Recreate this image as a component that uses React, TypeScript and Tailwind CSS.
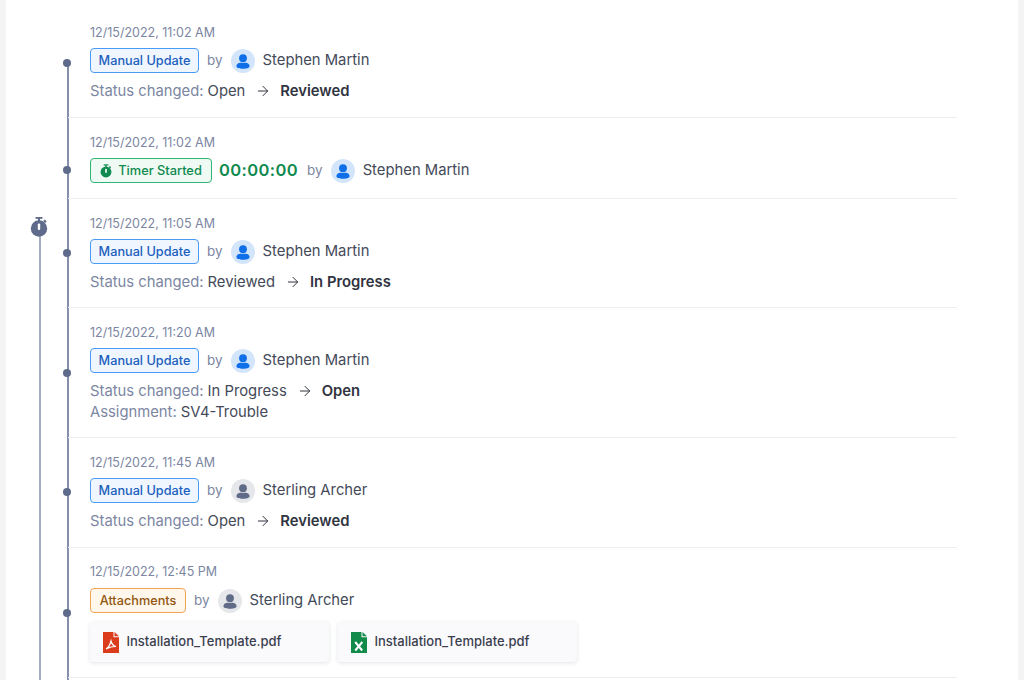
import { ArrowRight } from "lucide-react";

const font = { fontFamily: "Inter, 'Noto Sans', sans-serif" };

function Avatar({ gray }: { gray?: boolean }) {
  return (
    <div className={`w-6 h-6 rounded-full flex items-center justify-center ${gray ? "bg-[#e6e7eb]" : "bg-[#d2e5fa]"}`}>
      <svg viewBox="0 0 24 24" className="w-6 h-6" fill={gray ? "#5f6b87" : "#0f6fe8"}>
        <circle cx="12" cy="9.2" r="3.9" />
        <path d="M5.400 17.200c0-2.100 2-3.400 3.800-3.400h5.600c1.800 0 3.800 1.300 3.800 3.400 0 1.600-2.800 2.500-6.600 2.500s-6.600-.9-6.600-2.500z" />
      </svg>
    </div>
  );
}

function Stopwatch({ className, color }: { className: string; color: string }) {
  return (
    <svg viewBox="0 0 18 20" className={className}>
      <rect x="5.500" y="0" width="7" height="1.800" fill={color} />
      <rect x="8" y="1" width="2" height="3" fill={color} />
      <rect x="13.500" y="3" width="2.800" height="2.200" transform="rotate(45 14.800 4.200)" fill={color} />
      <circle cx="9" cy="11.500" r="8.200" fill={color} />
      <rect x="7.800" y="6.500" width="2.400" height="6.500" rx="1" fill="white" />
    </svg>
  );
}

function PdfIcon() {
  return (
    <svg viewBox="0 0 16 21" className="w-4 h-[21px]">
      <path d="M0 0h10.500v5.200H16V21H0z" fill="#dc3c1e" />
      <path d="M11.500 0L16 4.200h-4.500z" fill="#dc3c1e" />
      <path d="M3 17c2-1 4-4 5-8 .8 3 2.500 5 5 5.500-3-.2-6 .6-10 2.500z" fill="none" stroke="white" strokeWidth="1.200" />
    </svg>
  );
}

function XlsIcon() {
  return (
    <svg viewBox="0 0 16 21" className="w-4 h-[21px]">
      <path d="M0 0h10.500v5.200H16V21H0z" fill="#128a4a" />
      <path d="M11.500 0L16 4.200h-4.500z" fill="#128a4a" />
      <path d="M4.200 10l7 8.500M11.300 10l-7 8.500" stroke="white" strokeWidth="2" fill="none" />
    </svg>
  );
}

function By({ gray, name }: { gray?: boolean; name: string }) {
  return (
    <>
      <span className="text-[13.500px] text-[#7c86a2] ml-2">by</span>
      <div className="ml-2">
        <Avatar gray={gray} />
      </div>
      <span className="text-[14.800px] text-[#444a59] ml-2 -mt-px">{name}</span>
    </>
  );
}

function ManualTag() {
  return (
    <span className="h-[25px] w-[109px] flex items-center justify-center pt-px rounded bg-[#eff6ff] border border-[#4a9bf5] text-[#1c5fbd] text-[12.700px] font-medium">
      Manual Update
    </span>
  );
}

function Status({ from, to }: { from: string; to: string }) {
  return (
    <div className="mt-2 h-5 flex items-center text-[14.800px] leading-5">
      <span className="text-[#7c86a2]">Status changed:</span>
      <span className="text-[#444a59] ml-1">{from}</span>
      <ArrowRight className="w-4 h-4 ml-[10px] mr-[9px] text-[#30343f]" strokeWidth={1.500} />
      <span className="text-[#30343f] font-semibold">{to}</span>
    </div>
  );
}

function Row({ date, dot, last, children }: { date: string; dot: number; last?: boolean; children: React.ReactNode }) {
  return (
    <div className={`relative pl-[22px] border-b border-[#ecedf2] ${last ? "pt-4" : "pt-[17px]"}`}>
      <span className="block absolute left-[-5px] w-2 h-2 rounded-full bg-[#5f6b8b]" style={{ top: dot }} />
      <div className="h-4 leading-4 text-[12.500px] text-[#7c86a2]">{date}</div>
      {children}
    </div>
  );
}

function FileCard({ icon }: { icon: React.ReactNode }) {
  return (
    <div className="w-[239px] h-10 flex items-center gap-2 pl-[12.500px] rounded bg-[#fafafd] shadow-[0_1px_4px_rgba(50,55,80,0.14)]">
      {icon}
      <span className="text-[13px] font-medium text-[#3b404d]">Installation_Template.pdf</span>
    </div>
  );
}

export default function App() {
  return (
    <div className="w-[1024px] h-[680px] overflow-hidden bg-[#f4f4f5] pl-[6px] pr-[6px]" style={font}>
      <div className="relative h-full bg-white pt-2 pl-[62px]">
        {/* outer timeline */}
        <div className="absolute left-[32.500px] top-[228px] bottom-0 w-0.5 bg-[#a4abc2]" />
        <div className="absolute left-[24px] top-[217px] w-[18px] h-5">
          <Stopwatch className="w-[18px] h-5" color="#5f6b8b" />
        </div>

        <div className="relative w-[889px]">
          <div className="absolute left-[-1px] top-[55px] w-0.5 h-[620px] bg-[#8790ab]" />

          <Row date="12/15/2022, 11:02 AM" dot={51}>
            <div className="mt-[7px] h-[25px] flex items-center">
              <ManualTag />
              <By name="Stephen Martin" />
            </div>
            <div className="pb-4">
              <Status from="Open" to="Reviewed" />
            </div>
          </Row>

          <Row date="12/15/2022, 11:02 AM" dot={48}>
            <div className="mt-[7px] pb-[15px] flex items-center">
              <span className="h-[25px] w-[122px] flex items-center justify-center gap-[6px] pt-px rounded bg-[#f0faf4] border border-[#2fb573] text-[#0f8a50] text-[12.800px] font-medium">
                <Stopwatch className="w-3 h-[14px] -mt-px" color="#0f8a50" />
                Timer Started
              </span>
              <span className="ml-[7px] mr-px text-[#0f8a50] text-[16.500px] font-semibold tracking-[0.4px]">00:00:00</span>
              <By name="Stephen Martin" />
            </div>
          </Row>

          <Row date="12/15/2022, 11:05 AM" dot={50}>
            <div className="mt-[7px] h-[25px] flex items-center">
              <ManualTag />
              <By name="Stephen Martin" />
            </div>
            <div className="pb-[15px]">
              <Status from="Reviewed" to="In Progress" />
            </div>
          </Row>

          <Row date="12/15/2022, 11:20 AM" dot={61}>
            <div className="mt-[7px] h-[25px] flex items-center">
              <ManualTag />
              <By name="Stephen Martin" />
            </div>
            <Status from="In Progress" to="Open" />
            <div className="mt-px h-5 leading-5 text-[14.800px] pb-[15px] box-content">
              <span className="text-[#7c86a2]">Assignment:</span>
              <span className="text-[#444a59] ml-1">SV4-Trouble</span>
            </div>
          </Row>

          <Row date="12/15/2022, 11:45 AM" dot={50}>
            <div className="mt-[7px] h-[25px] flex items-center">
              <ManualTag />
              <By gray name="Sterling Archer" />
            </div>
            <div className="pb-4">
              <Status from="Open" to="Reviewed" />
            </div>
          </Row>

          <Row date="12/15/2022, 12:45 PM" dot={61} last>
            <div className="mt-2 h-[25px] flex items-center">
              <span className="h-[25px] w-[96px] flex items-center justify-center pt-px rounded bg-[#fff6ec] border border-[#f5a552] text-[#92560f] text-[12.700px] font-medium">
                Attachments
              </span>
              <By gray name="Sterling Archer" />
            </div>
            <div className="mt-[9px] pb-[15px] flex gap-[9px]">
              <FileCard icon={<PdfIcon />} />
              <FileCard icon={<XlsIcon />} />
            </div>
          </Row>
        </div>
      </div>
    </div>
  );
}
